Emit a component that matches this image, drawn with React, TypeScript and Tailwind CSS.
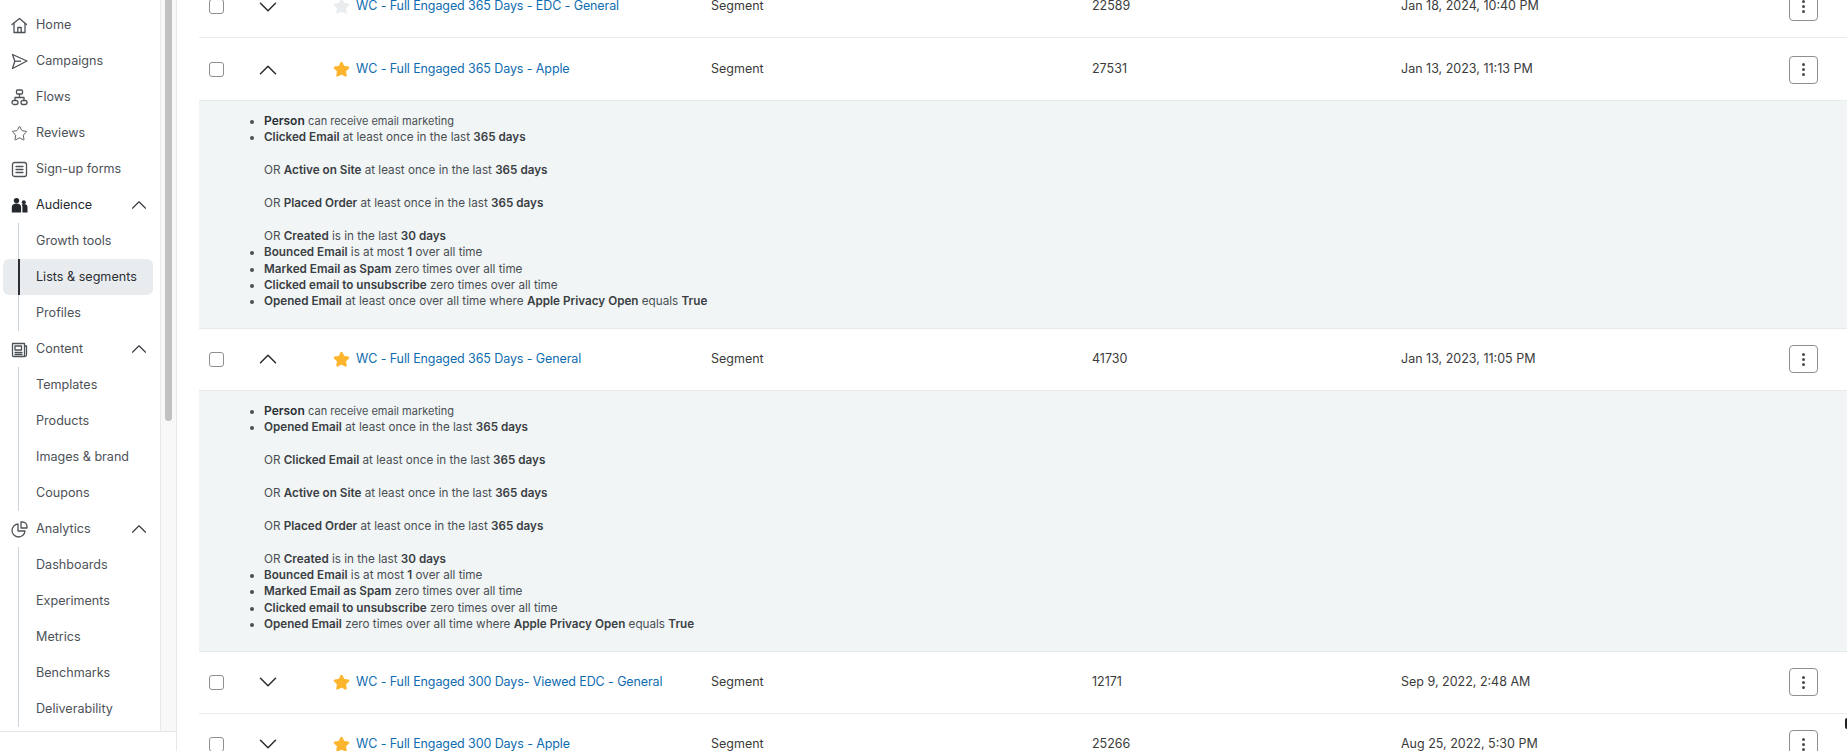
import React from "react";
import { ChevronDown, ChevronUp, Star } from "lucide-react";

const FONT = { fontFamily: "Inter, sans-serif" };

function HomeIcon() {
  return (
    <svg width="17" height="17" viewBox="0 0 17 17" fill="none" stroke="currentColor" strokeWidth="1.3" strokeLinejoin="round" strokeLinecap="round">
      <path d="M1 7.5 8.5 1.5l7 6" />
      <path d="M3 6.2V15.5h11V6.2" />
      <path d="M6.8 15.5v-5h3.4v5" />
    </svg>
  );
}

function SendIcon() {
  return (
    <svg width="17" height="17" viewBox="0 0 17 17" fill="none" stroke="currentColor" strokeWidth="1.3" strokeLinejoin="round">
      <path d="M1.5 1.5 16 8 1.5 15.5 3.8 8.2 1.5 1.5Z" />
      <path d="M3.8 8.2H10" />
    </svg>
  );
}

function FlowIcon() {
  return (
    <svg width="17" height="17" viewBox="0 0 17 17" fill="none" stroke="currentColor" strokeWidth="1.3" strokeLinejoin="round">
      <rect x="5.5" y="1" width="6" height="4" rx="1" />
      <rect x="1" y="11.5" width="6" height="4" rx="2" />
      <rect x="10" y="11.5" width="6" height="4" rx="2" />
      <path d="M8.5 5v3.5M4 11.5v-3h9v3" />
    </svg>
  );
}

function FormIcon() {
  return (
    <svg width="17" height="17" viewBox="0 0 17 17" fill="none" stroke="currentColor" strokeWidth="1.3" strokeLinecap="round">
      <rect x="1.5" y="1.5" width="14" height="14" rx="2" />
      <path d="M5 5.5h7M5 8.5h7M5 11.5h7" />
    </svg>
  );
}

function PeopleIcon() {
  return (
    <svg width="17" height="17" viewBox="0 0 17 17" fill="currentColor">
      <circle cx="5.5" cy="3.6" r="2.7" />
      <path d="M.8 15.5V10c0-2.4 2-3.6 4.7-3.6s4.6 1.2 4.6 3.6v5.5H.8Z" />
      <circle cx="12.8" cy="5.2" r="2" />
      <path d="M11.4 15.5V10c0-1 -.3-1.8-.8-2.4.6-.3 1.3-.5 2.2-.5 2.3 0 3.7 1.1 3.7 3.1v5.3h-5.1Z" />
    </svg>
  );
}

function NewsIcon() {
  return (
    <svg width="17" height="17" viewBox="0 0 17 17" fill="none" stroke="currentColor" strokeWidth="1.3" strokeLinecap="round" strokeLinejoin="round">
      <path d="M13.5 15.5H2.5a1 1 0 0 1-1-1V2.5h12v13Zm0 0c1 0 2-.5 2-1.5V5h-2" />
      <rect x="4" y="5" width="6.5" height="4" />
      <path d="M4 11.5h7M4 13.5h7" />
    </svg>
  );
}

function PieIcon() {
  return (
    <svg width="17" height="17" viewBox="0 0 17 17" fill="none" stroke="currentColor" strokeWidth="1.3" strokeLinejoin="round">
      <path d="M7 3a6.5 6.5 0 1 0 7 7H7V3Z" />
      <path d="M10 1h1.5a4.5 4.5 0 0 1 4.5 4.5V7h-6V1Z" />
    </svg>
  );
}

function NavItem({ icon, label, dark, open }: { icon: React.ReactNode; label: string; dark?: boolean; open?: boolean }) {
  return (
    <div className={`flex h-9 items-center pl-[11px] pr-[8px] text-[12.6px] ${dark ? "text-[#24282c]" : "text-[#4d5257]"}`}>
      <span className="flex w-[25px] shrink-0">{icon}</span>
      <span className="flex-1">{label}</span>
      {open && <ChevronUp size={26} strokeWidth={1} className="text-[#33373b]" />}
    </div>
  );
}

function SubItem({ label, active }: { label: string; active?: boolean }) {
  return (
    <div className={`relative ml-[3px] mr-[7px] flex h-9 items-center rounded-md pl-[33px] text-[12.6px] ${active ? "bg-[#e9ecef] text-[#2b2f33]" : "text-[#4d5257]"}`}>
      <span className={`absolute bottom-0 left-[15px] top-0 ${active ? "w-[2px] bg-[#2b2f33]" : "w-px bg-[#ccd5dd]"}`} />
      {label}
    </div>
  );
}

function Sidebar() {
  return (
    <aside className="flex h-full w-[177px] shrink-0 flex-col border-r border-[#e6e8ea]">
      <div className="flex h-[732px] border-b border-[#e3e6e8]">
        <nav className="w-[161px] shrink-0 overflow-hidden border-r border-[#e6e8ea] pt-[7px]">
          <NavItem icon={<HomeIcon />} label="Home" />
          <NavItem icon={<SendIcon />} label="Campaigns" />
          <NavItem icon={<FlowIcon />} label="Flows" />
          <NavItem icon={<Star size={17} strokeWidth={1.3} />} label="Reviews" />
          <NavItem icon={<FormIcon />} label="Sign-up forms" />
          <NavItem icon={<PeopleIcon />} label="Audience" dark open />
          <SubItem label="Growth tools" />
          <SubItem label="Lists & segments" active />
          <SubItem label="Profiles" />
          <NavItem icon={<NewsIcon />} label="Content" open />
          <SubItem label="Templates" />
          <SubItem label="Products" />
          <SubItem label="Images & brand" />
          <SubItem label="Coupons" />
          <NavItem icon={<PieIcon />} label="Analytics" open />
          <SubItem label="Dashboards" />
          <SubItem label="Experiments" />
          <SubItem label="Metrics" />
          <SubItem label="Benchmarks" />
          <SubItem label="Deliverability" />
        </nav>
        <div className="flex-1 bg-[#f8f8f8] px-[4px]">
          <div className="h-[421px] rounded-b-md bg-[#c1c1c1]" />
        </div>
      </div>
    </aside>
  );
}

function Kebab() {
  return (
    <button className="flex h-[28px] w-[29px] flex-col items-center justify-center gap-[2px] rounded-[4px] border border-[#8f8f8f] bg-white">
      <span className="h-[3px] w-[3px] rounded-full bg-[#4b4b4b]" />
      <span className="h-[3px] w-[3px] rounded-full bg-[#4b4b4b]" />
      <span className="h-[3px] w-[3px] rounded-full bg-[#4b4b4b]" />
    </button>
  );
}

function Row({ name, count, date, open, starred = true }: { name: string; count: string; date: string; open?: boolean; starred?: boolean }) {
  const starColor = starred ? "fill-[#fdb52d] text-[#fdb52d]" : "fill-[#e9edef] text-[#e9edef]";
  return (
    <div className="flex h-[62px] shrink-0 items-center border-b border-[#e8eaec] bg-white text-[12.5px] text-[#3b3b3b]">
      <span className="ml-[10px] h-[15px] w-[15px] shrink-0 rounded-[3px] border border-[#8f8f8f]" />
      <span className="ml-[29px] flex w-[30px] shrink-0 justify-center text-[#2b2b2b]">
        {open ? <ChevronUp size={30} strokeWidth={1.2} /> : <ChevronDown size={30} strokeWidth={1.2} />}
      </span>
      <span className="ml-[49px] flex w-[18px] shrink-0 justify-center">
        <Star size={17} className={starColor} />
      </span>
      <a className="ml-[6px] w-[355px] shrink-0 tracking-[-0.1px] text-[#0f6cb0]">{name}</a>
      <span className="w-[381px] shrink-0">Segment</span>
      <span className="w-[309px] shrink-0">{count}</span>
      <span className="w-[388px] shrink-0">{date}</span>
      <Kebab />
    </div>
  );
}

function Rule({ children }: { children: React.ReactNode }) {
  return <li>{children}</li>;
}

function B({ children }: { children: React.ReactNode }) {
  return <strong className="font-semibold text-[#3a3e43]">{children}</strong>;
}

function Or({ children }: { children: React.ReactNode }) {
  return (
    <>
      <br />
      <br />
      OR {children}
    </>
  );
}

function Details({ children }: { children: React.ReactNode }) {
  return (
    <div className="shrink-0 border-b border-[#e6eaed] bg-[#f1f5f6] pb-[18px] pt-[12px]">
      <ul className="ml-[65px] list-disc text-[11.7px] leading-[16.4px] text-[#4a4f54]">{children}</ul>
    </div>
  );
}

function PersonRule() {
  return (
    <Rule>
      <strong className="text-[12px] font-semibold text-[#2b2f33]">Person</strong>{" "}
      <span className="text-[11px]">can receive email marketing</span>
    </Rule>
  );
}

export default function App() {
  return (
    <div className="relative flex h-screen overflow-hidden bg-white" style={FONT}>
      <Sidebar />
      <main className="ml-[22px] flex min-w-0 flex-1 flex-col">
        <div className="-mt-[24px] flex flex-col">
          <div className="mb-px">
            <Row name="WC - Full Engaged 365 Days - EDC - General" count="22589" date="Jan 18, 2024, 10:40 PM" starred={false} />
          </div>
          <Row name="WC - Full Engaged 365 Days - Apple" count="27531" date="Jan 13, 2023, 11:13 PM" open />
          <Details>
            <PersonRule />
            <Rule>
              <B>Clicked Email</B> at least once in the last <B>365 days</B>
              <Or><B>Active on Site</B> at least once in the last <B>365 days</B></Or>
              <Or><B>Placed Order</B> at least once in the last <B>365 days</B></Or>
              <Or><B>Created</B> is in the last <B>30 days</B></Or>
            </Rule>
            <Rule><B>Bounced Email</B> is at most <B>1</B> over all time</Rule>
            <Rule><B>Marked Email as Spam</B> zero times over all time</Rule>
            <Rule><B>Clicked email to unsubscribe</B> zero times over all time</Rule>
            <Rule><B>Opened Email</B> at least once over all time where <B>Apple Privacy Open</B> equals <B>True</B></Rule>
          </Details>
          <Row name="WC - Full Engaged 365 Days - General" count="41730" date="Jan 13, 2023, 11:05 PM" open />
          <Details>
            <PersonRule />
            <Rule>
              <B>Opened Email</B> at least once in the last <B>365 days</B>
              <Or><B>Clicked Email</B> at least once in the last <B>365 days</B></Or>
              <Or><B>Active on Site</B> at least once in the last <B>365 days</B></Or>
              <Or><B>Placed Order</B> at least once in the last <B>365 days</B></Or>
              <Or><B>Created</B> is in the last <B>30 days</B></Or>
            </Rule>
            <Rule><B>Bounced Email</B> is at most <B>1</B> over all time</Rule>
            <Rule><B>Marked Email as Spam</B> zero times over all time</Rule>
            <Rule><B>Clicked email to unsubscribe</B> zero times over all time</Rule>
            <Rule><B>Opened Email</B> zero times over all time where <B>Apple Privacy Open</B> equals <B>True</B></Rule>
          </Details>
          <Row name="WC - Full Engaged 300 Days- Viewed EDC - General" count="12171" date="Sep 9, 2022, 2:48 AM" />
          <Row name="WC - Full Engaged 300 Days - Apple" count="25266" date="Aug 25, 2022, 5:30 PM" />
        </div>
      </main>
      {/* chat launcher peeking in from the right edge */}
      <span className="absolute right-0 top-[718px] h-[11px] w-[2px] rounded-l-full bg-[#222]" />
    </div>
  );
}
